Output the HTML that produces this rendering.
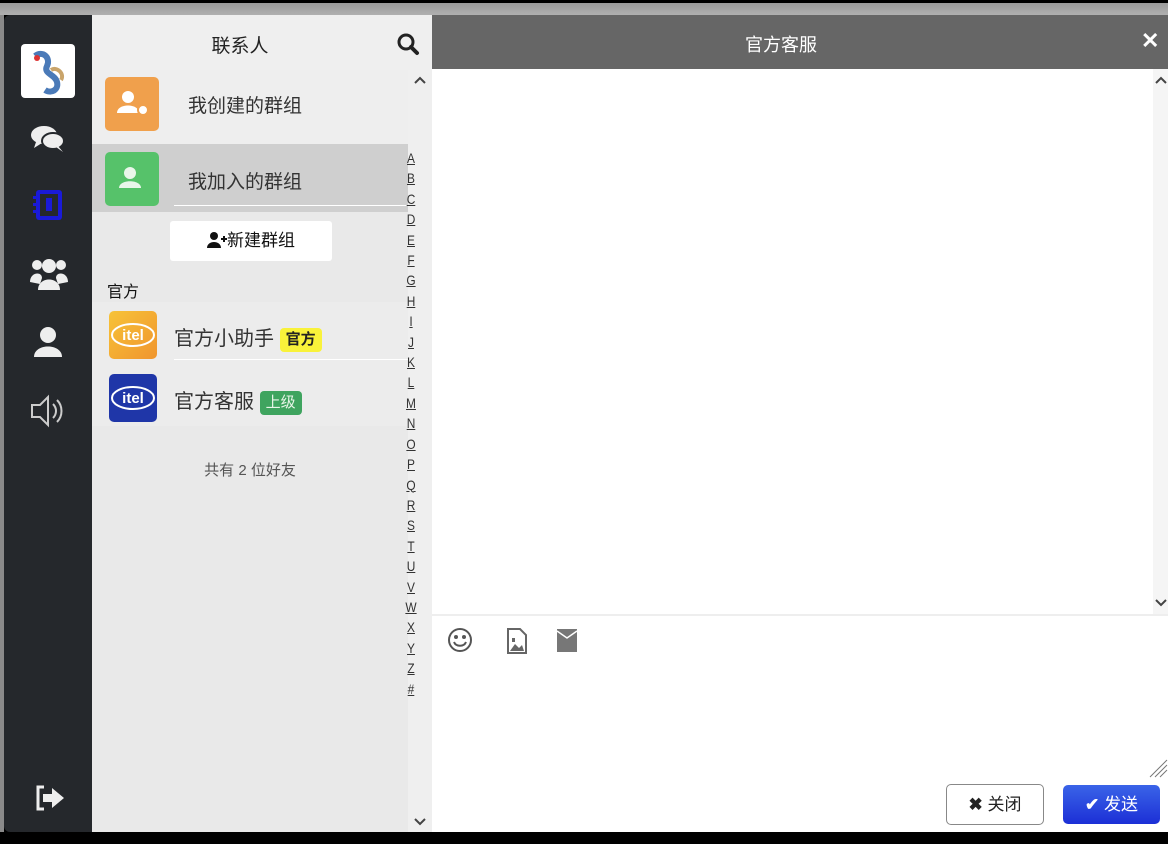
<!DOCTYPE html>
<html><head><meta charset="utf-8"><style>
*{margin:0;padding:0;box-sizing:border-box}
body{width:1168px;height:844px;overflow:hidden;background:#000;position:relative;font-family:"Liberation Sans","Noto Sans CJK SC",sans-serif}
.abs{position:absolute}
.topband{left:0;top:3px;width:1168px;height:12px;background:linear-gradient(#9a9a9a,#b0b0b0)}
.leftstrip{left:0;top:15px;width:4px;height:817px;background:#8a8a8a}
.side{left:4px;top:15px;width:88px;height:817px;background:#25282c;border-radius:6px 0 0 6px}
.panel{left:92px;top:15px;width:340px;height:817px;background:#e9e9e9}
.hdr{left:92px;top:15px;width:340px;height:55px;background:#efefef}
.chathdr{left:432px;top:15px;width:736px;height:54px;background:#666}
.chat{left:432px;top:69px;width:736px;height:763px;background:#fff}
.row{left:92px;width:316px;font-size:19px;color:#333}
.ico{left:105px;width:54px;height:54px;border-radius:5px}
.letters{left:403px;top:148px;width:16px;font-size:14px;color:#333;text-align:center;line-height:20.4px}
.letters span{display:block;text-decoration:underline;transform:scaleX(0.85)}
.badge{display:inline-block;font-size:15px;padding:0 6px;border-radius:4px;line-height:24px;vertical-align:middle}
.chev{stroke:#444;stroke-width:2;fill:none}
</style></head><body>
<div class="abs topband"></div>
<div class="abs leftstrip"></div>
<div class="abs side"></div>
<div class="abs" style="left:21px;top:44px;width:54px;height:54px;background:#fff;border-radius:4px;overflow:hidden">
<svg width="54" height="54"><path d="M14 12 C22 6 30 14 26 22 C22 30 34 30 36 38 C38 46 30 50 24 46" stroke="#4a7ab8" stroke-width="6" fill="none"/><path d="M30 26 C36 22 44 30 40 36" stroke="#c9a46a" stroke-width="4" fill="none"/><circle cx="16" cy="14" r="3" fill="#d33"/></svg></div>
<svg class="abs" style="left:30px;top:124px" width="36" height="30"><ellipse cx="14" cy="11" rx="13" ry="9" fill="#eee"/><ellipse cx="23" cy="17" rx="11" ry="8" fill="#eee" stroke="#25282c" stroke-width="2"/><path d="M6 18 L4 24 L12 19Z M28 22 L33 28 L26 23Z" fill="#eee"/></svg>
<svg class="abs" style="left:33px;top:189px" width="32" height="32"><rect x="3" y="1" width="26" height="30" rx="3" fill="#1a1ad8"/><rect x="7" y="5" width="18" height="22" fill="#25282c"/><rect x="13" y="9" width="6" height="13" fill="#1a1ad8"/><rect x="0" y="7" width="5" height="3" fill="#1a1ad8"/><rect x="0" y="14" width="5" height="3" fill="#1a1ad8"/><rect x="0" y="21" width="5" height="3" fill="#1a1ad8"/></svg>
<svg class="abs" style="left:30px;top:256px" width="38" height="36"><circle cx="19" cy="10" r="7" fill="#eee"/><circle cx="7" cy="9" r="5" fill="#eee"/><circle cx="31" cy="9" r="5" fill="#eee"/><path d="M8 34 C8 20 30 20 30 34Z" fill="#eee"/><path d="M0 26 C0 16 12 15 12 22 L10 28Z M38 26 C38 16 26 15 26 22 L28 28Z" fill="#eee"/></svg>
<svg class="abs" style="left:33px;top:326px" width="30" height="32"><circle cx="15" cy="9" r="8" fill="#eee"/><path d="M1 31 C1 17 29 17 29 31Z" fill="#eee"/></svg>
<svg class="abs" style="left:30px;top:394px" width="38" height="34" fill="none" stroke="#ccc" stroke-width="2"><path d="M2 11 H10 L18 3 V31 L10 23 H2Z"/><path d="M23 10 C27 14 27 20 23 24"/><path d="M27 6 C33 12 33 22 27 28"/></svg>
<svg class="abs" style="left:35px;top:785px" width="32" height="26"><path d="M9 2 H3 V24 H9" stroke="#eee" stroke-width="3" fill="none"/><path d="M8 9 H17 V3 L29 13 L17 23 V17 H8Z" fill="#eee"/></svg>

<div class="abs panel"></div>
<div class="abs" style="left:408px;top:70px;width:24px;height:762px;background:#efefef"></div>
<div class="abs hdr"></div>
<div class="abs" style="left:180px;top:31px;width:120px;text-align:center;font-size:19px;color:#222">联系人</div>
<svg class="abs" style="left:396px;top:32px" width="24" height="24"><circle cx="10" cy="10" r="7" stroke="#222" stroke-width="3" fill="none"/><path d="M15 15 L21 21" stroke="#222" stroke-width="4" stroke-linecap="round"/></svg>
<svg class="abs" style="left:414px;top:76px" width="12" height="8"><path class="chev" d="M1 7 L6 2 L11 7"/></svg>
<svg class="abs" style="left:414px;top:818px" width="12" height="8"><path class="chev" d="M1 1 L6 6 L11 1"/></svg>

<div class="abs row" style="top:70px;height:74px;background:#eeeeee"></div>
<div class="abs ico" style="top:77px;background:#f0a04c"><svg width="54" height="54"><circle cx="23" cy="20" r="6" fill="#fff"/><path d="M12 36 C12 26 34 26 34 36Z" fill="#fff"/><circle cx="38" cy="33" r="5" fill="#fff" stroke="#f0a04c" stroke-width="2"/></svg></div>
<div class="abs" style="left:188px;top:91px;font-size:19px;color:#333">我创建的群组</div>
<div class="abs row" style="top:144px;height:68px;background:#cfcfcf"></div>
<div class="abs ico" style="top:152px;background:#56c26a"><svg width="54" height="54"><circle cx="25" cy="21" r="6" fill="#e9f6ea"/><path d="M14 36 C14 27 36 27 36 36Z" fill="#e9f6ea"/></svg></div>
<div class="abs" style="left:188px;top:167px;font-size:19px;color:#333">我加入的群组</div>
<div class="abs" style="left:174px;top:205px;width:234px;height:1px;background:#fff"></div>
<div class="abs" style="left:170px;top:221px;width:162px;height:40px;background:#fff;border-radius:3px;text-align:center;line-height:40px;font-size:17px;color:#111"><svg width="20" height="16" style="vertical-align:-2px"><circle cx="7" cy="4" r="4" fill="#111"/><path d="M0 16 C0 8 14 8 14 16Z" fill="#111"/><path d="M14 7 H20 M17 4 V10" stroke="#111" stroke-width="2"/></svg>新建群组</div>
<div class="abs" style="left:107px;top:278px;font-size:16px;color:#111">官方</div>
<div class="abs" style="left:92px;top:302px;width:316px;height:124px;background:#ececec"></div>
<div class="abs ico" style="left:109px;top:311px;width:48px;height:48px;background:linear-gradient(135deg,#f7c338,#f0952e)"><svg width="48" height="48"><ellipse cx="24" cy="24" rx="21" ry="11" stroke="#fff" stroke-width="2" fill="none"/><text x="24" y="29" font-size="15" font-weight="bold" fill="#fff" text-anchor="middle" font-family="Liberation Sans">itel</text></svg></div>
<div class="abs" style="left:174px;top:322px;font-size:20px;color:#333">官方小助手 <span class="badge" style="background:#f9f23a;color:#222;font-weight:bold">官方</span></div>
<div class="abs" style="left:174px;top:359px;width:234px;height:1px;background:#fff"></div>
<div class="abs ico" style="left:109px;top:374px;width:48px;height:48px;background:#1f36a8"><svg width="48" height="48"><ellipse cx="24" cy="24" rx="21" ry="11" stroke="#fff" stroke-width="2" fill="none"/><text x="24" y="29" font-size="15" font-weight="bold" fill="#fff" text-anchor="middle" font-family="Liberation Sans">itel</text></svg></div>
<div class="abs" style="left:174px;top:385px;font-size:20px;color:#333">官方客服 <span class="badge" style="background:#3fa45f;color:#e8f5e8">上级</span></div>
<div class="abs" style="left:150px;top:459px;width:200px;text-align:center;font-size:15px;color:#555">共有 2 位好友</div>
<div class="abs letters"><span>A</span><span>B</span><span>C</span><span>D</span><span>E</span><span>F</span><span>G</span><span>H</span><span>I</span><span>J</span><span>K</span><span>L</span><span>M</span><span>N</span><span>O</span><span>P</span><span>Q</span><span>R</span><span>S</span><span>T</span><span>U</span><span>V</span><span>W</span><span>X</span><span>Y</span><span>Z</span><span>#</span></div>

<div class="abs chathdr"></div>
<div class="abs" style="left:681px;top:31px;width:200px;text-align:center;color:#fff;font-size:18px">官方客服</div>
<div class="abs" style="left:1141px;top:28px;color:#fff;font-size:22px;font-weight:bold">&#10005;</div>
<div class="abs chat"></div>
<div class="abs" style="left:1153px;top:69px;width:15px;height:546px;background:#f5f5f5"></div>
<svg class="abs" style="left:1155px;top:76px" width="12" height="8"><path class="chev" d="M1 7 L6 2 L11 7"/></svg>
<svg class="abs" style="left:1155px;top:599px" width="12" height="8"><path class="chev" d="M1 1 L6 6 L11 1"/></svg>
<div class="abs" style="left:432px;top:614px;width:736px;height:2px;background:#eee"></div>
<svg class="abs" style="left:446px;top:626px" width="28" height="28" fill="none" stroke="#555" stroke-width="2"><circle cx="14" cy="14" r="11"/><circle cx="10" cy="11" r="1" fill="#555"/><circle cx="18" cy="11" r="1" fill="#555"/><path d="M8 16 C10 21 18 21 20 16"/></svg>
<svg class="abs" style="left:506px;top:628px" width="22" height="26"><path d="M2 1 H14 L20 7 V25 H2Z" fill="none" stroke="#666" stroke-width="2"/><path d="M4 23 L9 16 L13 20 L16 17 L18 23Z" fill="#666"/><rect x="6" y="10" width="3" height="4" fill="#666"/></svg>
<svg class="abs" style="left:556px;top:628px" width="22" height="26"><rect x="1" y="1" width="20" height="23" fill="#777"/><path d="M1 3 L11 10 L21 3" stroke="#fff" stroke-width="1.5" fill="none"/></svg>
<svg class="abs" style="left:1148px;top:758px" width="20" height="20" stroke="#777"><path d="M2 19 L19 2 M7 19 L19 7 M12 19 L19 12"/></svg>
<div class="abs" style="left:946px;top:784px;width:98px;height:41px;border:1px solid #888;border-radius:5px;background:#fff;text-align:center;line-height:39px;font-size:17px;color:#222"><b>&#10006;</b> 关闭</div>
<div class="abs" style="left:1063px;top:785px;width:97px;height:39px;border-radius:5px;background:linear-gradient(#3a64e8,#1c2fd6);text-align:center;line-height:39px;font-size:17px;color:#fff"><b>&#10004;</b> 发送</div>
</body></html>
